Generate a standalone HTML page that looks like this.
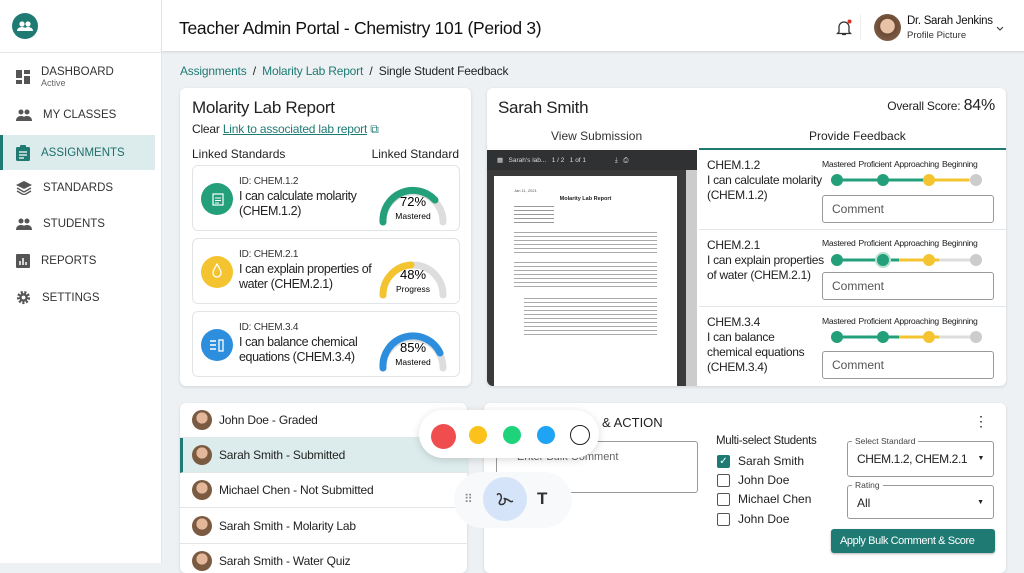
<!DOCTYPE html>
<html><head><meta charset="utf-8"><style>
*{box-sizing:border-box;margin:0;padding:0}
body{width:1024px;height:563px;overflow:hidden;font-family:"Liberation Sans",sans-serif;background:#eef1f3;color:#222;position:relative;font-size:12px}
.abs{position:absolute}
.side{left:0;top:0;width:162px;height:563px;background:#fff;border-right:1px solid #e3e6e8}
.nav{position:absolute;left:16px;font-size:11.5px;color:#333;display:flex;align-items:center}
.nav svg{margin-right:11px}
.card{position:absolute;background:#fff;border-radius:6px;box-shadow:0 1px 3px rgba(0,0,0,.12)}
.std{position:absolute;left:12px;width:268px;height:66px;border:1px solid #e2e5e7;border-radius:6px}
.std .ic{position:absolute;left:8px;top:17px;width:32px;height:32px;border-radius:50%}
.std .t{position:absolute;left:46px;top:8px;font-size:12.5px;line-height:15px;color:#222;letter-spacing:-0.4px;white-space:nowrap}
.std .t small{font-size:10px;display:block;color:#333;letter-spacing:-0.2px}
.std svg{position:absolute;right:10px;top:8px}
.fb{position:absolute;left:212px;width:307px;border-bottom:1px solid #e3e6e8}
.fb .l{position:absolute;left:8px;font-size:12px;line-height:15px;letter-spacing:-0.3px;white-space:nowrap}
.fb .lbl{position:absolute;left:123px;font-size:8.6px;color:#222;letter-spacing:-0.3px;white-space:nowrap;word-spacing:1px}
.fb .cm{position:absolute;left:123px;width:172px;height:28px;border:1px solid #999;border-radius:3px;font-size:12px;color:#555;padding:6px 9px}
.row{position:absolute;left:0;width:287px;height:35px;border-bottom:1px solid #e3e6e8;font-size:12px;display:flex;align-items:center;padding-left:12px;letter-spacing:-0.2px}
.av{width:20px;height:20px;border-radius:50%;background:radial-gradient(circle at 50% 40%,#e3b89a 35%,#7a5a40 37%);margin-right:7px}
.cb{display:flex;align-items:center;font-size:12px;position:absolute;left:717px}
.cb i{display:inline-block;width:13px;height:13px;border:1.5px solid #555;border-radius:2px;margin-right:8px}
</style></head><body>
<div class="abs side">
 <div class="abs" style="left:12px;top:13px;width:26px;height:26px;border-radius:50%;background:#1f7a74"><svg width="26" height="26" viewBox="0 0 26 26"><circle cx="10" cy="11" r="2.6" fill="#fff"/><circle cx="16" cy="11" r="2.6" fill="#fff"/><path d="M5 18c0-3 3-4 5-4s5 1 5 4zM12 18c0-3 2-4 4-4s5 1 5 4z" fill="#fff"/></svg></div>
 <div class="abs" style="left:0;top:52px;width:162px;border-top:1px solid #e3e6e8"></div>
 <div class="nav" style="top:66px"><svg width="14" height="14"><rect x="0" y="0" width="6" height="8" fill="#555"/><rect x="8" y="0" width="6" height="4" fill="#555"/><rect x="8" y="6" width="6" height="8" fill="#555"/><rect x="0" y="10" width="6" height="4" fill="#555"/></svg><div><div>DASHBOARD</div><div style="font-size:9px;color:#666">Active</div></div></div>
 <div class="nav" style="top:109px"><svg width="16" height="12"><circle cx="5" cy="3" r="2.5" fill="#555"/><circle cx="11" cy="3" r="2.5" fill="#555"/><path d="M0 12c0-4 3-5 5-5s5 1 5 5zM6 12c0-4 3-5 5-5s5 1 5 5z" fill="#555"/></svg>MY CLASSES</div>
 <div class="abs" style="left:0;top:135px;width:155px;height:35px;background:#dcecec;border-left:3px solid #1f7a74"></div>
 <div class="nav" style="top:145px;color:#1f6f6a"><svg width="14" height="16"><rect x="0" y="2" width="14" height="14" rx="1.5" fill="#1f7a74"/><rect x="4" y="0" width="6" height="4" rx="1" fill="#1f7a74"/><path d="M3 7h8M3 10h8M3 13h5" stroke="#fff" stroke-width="1.2"/></svg>ASSIGNMENTS</div>
 <div class="nav" style="top:181px"><svg width="16" height="14"><path d="M8 0l8 4-8 4-8-4z" fill="#555"/><path d="M1 7l7 4 7-4M1 10l7 4 7-4" stroke="#555" stroke-width="1.4" fill="none"/></svg>STANDARDS</div>
 <div class="nav" style="top:218px"><svg width="16" height="12"><circle cx="5" cy="3" r="2.5" fill="#555"/><circle cx="11" cy="3" r="2.5" fill="#555"/><path d="M0 12c0-4 3-5 5-5s5 1 5 5zM6 12c0-4 3-5 5-5s5 1 5 5z" fill="#555"/></svg>STUDENTS</div>
 <div class="nav" style="top:254px"><svg width="14" height="14"><rect width="14" height="14" rx="1" fill="#555"/><path d="M4 11V7M7 11V4M10 11V8" stroke="#fff" stroke-width="1.5"/></svg>REPORTS</div>
 <div class="nav" style="top:290px"><svg width="15" height="15" viewBox="0 0 16 16"><circle cx="8" cy="8" r="5.5" fill="none" stroke="#555" stroke-width="3" stroke-dasharray="2.2 1.6"/><circle cx="8" cy="8" r="4.5" fill="#555"/><circle cx="8" cy="8" r="2" fill="#fff"/></svg>SETTINGS</div>
</div>
<div class="abs" style="left:162px;top:0;width:862px;height:52px;background:#fff;border-bottom:1px solid #ddd;box-shadow:0 1px 2px rgba(0,0,0,.06)">
 <div class="abs" style="left:17px;top:18px;font-size:17.5px;color:#111;letter-spacing:-0.3px">Teacher Admin Portal - Chemistry 101 (Period 3)</div>
 <svg class="abs" style="left:674px;top:19px" width="16" height="17"><path d="M3 13V8a5 5 0 0 1 10 0v5l1.5 1.5h-13zM6 15.5h4" stroke="#333" stroke-width="1.3" fill="none"/><circle cx="13.5" cy="2.5" r="2" fill="#d32"/></svg>
 <div class="abs" style="left:698px;top:14px;height:26px;border-left:1px solid #eee"></div>
 <div class="abs" style="left:712px;top:14px;width:27px;height:27px;border-radius:50%;background:radial-gradient(circle at 50% 45%,#e8c2a6 35%,#6b4a34 38%,#8a6a55)"></div>
 <div class="abs" style="left:745px;top:15px;font-size:11.5px;color:#111;letter-spacing:-0.3px;white-space:nowrap">Dr. Sarah Jenkins</div>
 <div class="abs" style="left:745px;top:30px;font-size:9.5px;color:#333">Profile Picture</div>
 <svg class="abs" style="left:834px;top:26px" width="8" height="5"><path d="M1 1l3 3 3-3" stroke="#444" stroke-width="1.2" fill="none"/></svg>
</div>
<div class="abs" style="left:180px;top:64px;font-size:12px;letter-spacing:-0.2px"><span style="color:#1f7a74">Assignments</span> &nbsp;/&nbsp; <span style="color:#1f7a74">Molarity Lab Report</span> &nbsp;/&nbsp; Single Student Feedback</div>

<div class="card" style="left:180px;top:88px;width:291px;height:298px">
 <div class="abs" style="left:12px;top:10px;font-size:17px;letter-spacing:-0.3px">Molarity Lab Report</div>
 <div class="abs" style="left:12px;top:34px;font-size:12px;letter-spacing:-0.2px">Clear <span style="color:#1f7a74;text-decoration:underline">Link to associated lab report</span> <span style="color:#1f7a74">⧉</span></div>
 <div class="abs" style="left:12px;top:59px;font-size:12px">Linked Standards</div>
 <div class="abs" style="right:12px;top:59px;font-size:12px">Linked Standard</div>
 <div class="std" style="top:77px"><div class="ic" style="background:#23a07a"></div><svg class="abs" style="left:19px;top:26px;right:auto" width="12" height="14"><rect x="1" y="2" width="10" height="11" stroke="#fff" fill="none" stroke-width="1.2"/><path d="M3 6h6M3 8.5h6M3 11h4" stroke="#fff"/></svg><div class="t"><small>ID: CHEM.1.2</small>I can calculate molarity<br>(CHEM.1.2)</div>
  <svg width="72" height="52" viewBox="0 0 72 52"><path d="M6 48A30 30 0 0 1 66 48" stroke="#ddd" stroke-width="7" fill="none" stroke-linecap="round"/><path d="M6 48A30 30 0 0 1 58 26" stroke="#23a07a" stroke-width="7" fill="none" stroke-linecap="round"/><text x="36" y="32" font-size="13" text-anchor="middle" font-family="Liberation Sans">72%</text><text x="36" y="45" font-size="8.5" text-anchor="middle" font-family="Liberation Sans">Mastered</text></svg></div>
 <div class="std" style="top:150px"><div class="ic" style="background:#f4c430"></div><svg class="abs" style="left:18px;top:24px;right:auto" width="12" height="16"><path d="M6 1C4 5 2 7 2 10a4 4 0 0 0 8 0C10 7 8 5 6 1z" stroke="#fff" stroke-width="1.3" fill="none"/></svg><div class="t"><small>ID: CHEM.2.1</small>I can explain properties of<br>water (CHEM.2.1)</div>
  <svg width="72" height="52" viewBox="0 0 72 52"><path d="M6 48A30 30 0 0 1 66 48" stroke="#ddd" stroke-width="7" fill="none" stroke-linecap="round"/><path d="M6 48A30 30 0 0 1 34 18" stroke="#f4c430" stroke-width="7" fill="none" stroke-linecap="round"/><text x="36" y="32" font-size="13" text-anchor="middle" font-family="Liberation Sans">48%</text><text x="36" y="45" font-size="8.5" text-anchor="middle" font-family="Liberation Sans">Progress</text></svg></div>
 <div class="std" style="top:223px"><div class="ic" style="background:#2e8ede"></div><svg class="abs" style="left:16px;top:25px;right:auto" width="16" height="16"><path d="M1 4h6M1 8h6M1 12h6" stroke="#fff" stroke-width="1.4"/><rect x="10" y="3" width="4" height="11" stroke="#fff" fill="none" stroke-width="1.3"/></svg><div class="t"><small>ID: CHEM.3.4</small>I can balance chemical<br>equations (CHEM.3.4)</div>
  <svg width="72" height="52" viewBox="0 0 72 52"><path d="M6 48A30 30 0 0 1 66 48" stroke="#ddd" stroke-width="7" fill="none" stroke-linecap="round"/><path d="M6 48A30 30 0 0 1 63 33" stroke="#2e8ede" stroke-width="7" fill="none" stroke-linecap="round"/><text x="36" y="32" font-size="13" text-anchor="middle" font-family="Liberation Sans">85%</text><text x="36" y="45" font-size="8.5" text-anchor="middle" font-family="Liberation Sans">Mastered</text></svg></div>
</div>

<div class="card" style="left:487px;top:88px;width:519px;height:298px;overflow:hidden">
 <div class="abs" style="left:11px;top:10px;font-size:17px;letter-spacing:-0.3px">Sarah Smith</div>
 <div class="abs" style="right:11px;top:9px;font-size:12px;letter-spacing:-0.2px">Overall Score: <span style="font-size:16px">84%</span></div>
 <div class="abs" style="left:64px;top:41px;font-size:12px;color:#333">View Submission</div>
 <div class="abs" style="left:322px;top:41px;font-size:12px">Provide Feedback</div>
 <div class="abs" style="left:0;top:62px;width:210px;height:236px;background:#3a3a3a">
  <div class="abs" style="left:0;top:0;width:210px;height:20px;background:#2f3133;color:#ddd;font-size:6.5px;padding:6px 10px;white-space:nowrap">▦ &nbsp; Sarah's lab... &nbsp; 1 / 2 &nbsp; 1 of 1 &nbsp;&nbsp;&nbsp;&nbsp;&nbsp;&nbsp;&nbsp;&nbsp;&nbsp;&nbsp;&nbsp;&nbsp;&nbsp;&nbsp; ⤓ &nbsp; ⎙</div>
  <div class="abs" style="left:7px;top:26px;width:183px;height:214px;background:#fff;padding:12px 20px;font-size:4px;line-height:5px;color:#555">
   <div>Jan 11, 2021</div><div style="text-align:center;font-weight:bold;font-size:5.5px;color:#222;margin:4px 0">Molarity Lab Report</div>
   <div style="height:20px;width:40px;background:repeating-linear-gradient(#999 0 1px,#fff 1px 4px);margin-bottom:4px"></div>
   <div style="height:24px;background:repeating-linear-gradient(#aaa 0 1.2px,#fff 1.2px 4px);margin:6px 0"></div>
   <div style="height:26px;background:repeating-linear-gradient(#aaa 0 1.2px,#fff 1.2px 4px);margin:6px 0"></div>
   <div style="height:40px;margin-left:10px;background:repeating-linear-gradient(#aaa 0 1.2px,#fff 1.2px 4px);margin-top:10px"></div>
  </div>
  <div class="abs" style="left:199px;top:20px;width:11px;height:216px;background:#ccc"></div>
 </div>
 <div class="abs" style="left:212px;top:60px;width:307px;border-top:2px solid #1f7a74"></div>
 <div class="fb" style="top:62px;height:80px"><div class="l" style="top:8px">CHEM.1.2<br>I can calculate molarity<br>(CHEM.1.2)</div><div class="lbl" style="top:9px">Mastered Proficient Approaching Beginning</div>
  <svg class="abs" style="left:130px;top:22px" width="160" height="16"><path d="M8 8H100" stroke="#23a07a" stroke-width="3"/><path d="M100 8H140" stroke="#f4c430" stroke-width="3"/><path d="M140 8H152" stroke="#ddd" stroke-width="3"/><circle cx="8" cy="8" r="6" fill="#23a07a"/><circle cx="54" cy="8" r="6" fill="#23a07a"/><circle cx="100" cy="8" r="6" fill="#f4c430"/><circle cx="147" cy="8" r="6" fill="#ccc"/></svg>
  <div class="cm" style="top:45px">Comment</div></div>
 <div class="fb" style="top:142px;height:77px"><div class="l" style="top:8px">CHEM.2.1<br>I can explain properties<br>of water (CHEM.2.1)</div><div class="lbl" style="top:8px">Mastered Proficient Approaching Beginning</div>
  <svg class="abs" style="left:130px;top:21px" width="160" height="18"><path d="M8 9H70" stroke="#23a07a" stroke-width="3"/><path d="M70 9H110" stroke="#f4c430" stroke-width="3"/><path d="M110 9H152" stroke="#ddd" stroke-width="3"/><circle cx="8" cy="9" r="6" fill="#23a07a"/><circle cx="54" cy="9" r="8" fill="#b8e0d4"/><circle cx="54" cy="9" r="6" fill="#23a07a"/><circle cx="100" cy="9" r="6" fill="#f4c430"/><circle cx="147" cy="9" r="6" fill="#ccc"/></svg>
  <div class="cm" style="top:42px">Comment</div></div>
 <div class="fb" style="top:219px;height:79px;border:none"><div class="l" style="top:8px">CHEM.3.4<br>I can balance<br>chemical equations<br>(CHEM.3.4)</div><div class="lbl" style="top:9px">Mastered Proficient Approaching Beginning</div>
  <svg class="abs" style="left:130px;top:22px" width="160" height="16"><path d="M8 8H70" stroke="#23a07a" stroke-width="3"/><path d="M70 8H110" stroke="#f4c430" stroke-width="3"/><path d="M110 8H152" stroke="#ddd" stroke-width="3"/><circle cx="8" cy="8" r="6" fill="#23a07a"/><circle cx="54" cy="8" r="6" fill="#23a07a"/><circle cx="100" cy="8" r="6" fill="#f4c430"/><circle cx="147" cy="8" r="6" fill="#ccc"/></svg>
  <div class="cm" style="top:44px">Comment</div></div>
</div>

<div class="card" style="left:180px;top:403px;width:287px;height:170px;overflow:hidden">
 <div class="row" style="top:0"><div class="av"></div>John Doe - Graded</div>
 <div class="row" style="top:35px;background:#dcecec;border-left:3px solid #1f7a74;padding-left:9px"><div class="av"></div>Sarah Smith - Submitted</div>
 <div class="row" style="top:70px"><div class="av"></div>Michael Chen - Not Submitted</div>
 <div class="row" style="top:106px"><div class="av"></div>Sarah Smith - Molarity Lab</div>
 <div class="row" style="top:141px"><div class="av"></div>Sarah Smith - Water Quiz</div>
</div>

<div class="card" style="left:484px;top:403px;width:522px;height:170px">
 <div class="abs" style="left:118px;top:12px;font-size:13px">&amp; ACTION</div>
 <div class="abs" style="right:18px;top:10px;font-size:14px">⋮</div>
 <div class="abs" style="left:12px;top:38px;width:202px;height:52px;border:1px solid #999;border-radius:3px;font-size:11px;color:#666;padding:9px 20px">Enter Bulk Comment</div>
 <div class="abs" style="left:232px;top:32px;font-size:11.5px;letter-spacing:-0.3px">Multi-select Students</div>
 <div class="abs" style="left:363px;top:38px;width:147px;height:36px;border:1px solid #999;border-radius:3px;font-size:12px;padding:10px 9px;letter-spacing:-0.4px;white-space:nowrap">CHEM.1.2, CHEM.2.1 <span style="position:absolute;right:9px;top:13px;font-size:7px">▼</span></div>
 <div class="abs" style="left:368px;top:33px;background:#fff;font-size:8.5px;padding:0 3px;color:#444">Select Standard</div>
 <div class="abs" style="left:363px;top:82px;width:147px;height:34px;border:1px solid #999;border-radius:3px;font-size:12px;padding:10px 9px">All <span style="position:absolute;right:9px;top:13px;font-size:7px">▼</span></div>
 <div class="abs" style="left:368px;top:77px;background:#fff;font-size:8.5px;padding:0 3px;color:#444">Rating</div>
 <div class="abs" style="left:347px;top:126px;width:164px;height:24px;background:#1f7a74;border-radius:3px;color:#fff;font-size:11px;padding:6px 9px;letter-spacing:-0.4px;white-space:nowrap;box-shadow:0 1px 2px rgba(0,0,0,.3)">Apply Bulk Comment &amp; Score</div>
</div>
<div class="cb" style="top:454px"><i style="background:#1f7a74;border-color:#1f7a74;color:#fff;font-size:10px;font-style:normal;text-align:center;line-height:11px">✓</i>Sarah Smith</div>
<div class="cb" style="top:473px"><i></i>John Doe</div>
<div class="cb" style="top:492px"><i></i>Michael Chen</div>
<div class="cb" style="top:512px"><i></i>John Doe</div>

<div class="abs" style="left:419px;top:410px;width:180px;height:48px;background:#fff;border-radius:24px;box-shadow:0 2px 8px rgba(0,0,0,.15)">
 <div class="abs" style="left:12px;top:14px;width:25px;height:25px;border-radius:50%;background:#f04e4e"></div>
 <div class="abs" style="left:50px;top:16px;width:18px;height:18px;border-radius:50%;background:#fbc21b"></div>
 <div class="abs" style="left:84px;top:16px;width:18px;height:18px;border-radius:50%;background:#1fd37a"></div>
 <div class="abs" style="left:118px;top:16px;width:18px;height:18px;border-radius:50%;background:#1ea3f5"></div>
 <div class="abs" style="left:151px;top:15px;width:20px;height:20px;border-radius:50%;border:1.5px solid #222"></div>
</div>
<div class="abs" style="left:454px;top:472px;width:118px;height:56px;background:#f8f9fb;border-radius:28px">
 <div class="abs" style="left:10px;top:20px;color:#888;font-size:12px;letter-spacing:-2px">⠿</div>
 <div class="abs" style="left:29px;top:5px;width:44px;height:44px;border-radius:50%;background:#d6e4fa"><svg width="44" height="44"><path d="M14 18c3-4 6 2 3 6s4 5 5 1-3-4 1-3 4 4 7 2" stroke="#333" stroke-width="1.5" fill="none"/></svg></div>
 <div class="abs" style="left:83px;top:17px;font-size:17px;font-weight:bold;color:#333">T</div>
</div>
</body></html>
